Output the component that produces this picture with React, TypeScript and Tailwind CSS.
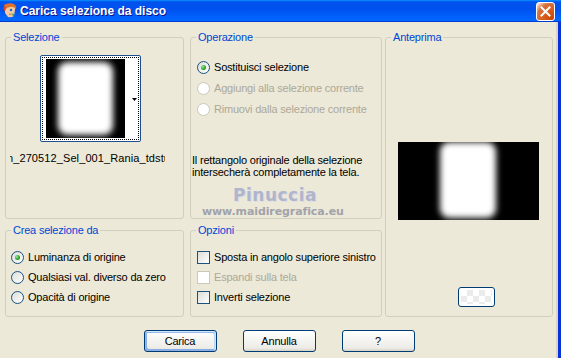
import React from 'react';

const font = "font-['Liberation_Sans',Arial,sans-serif]";

const Radio = ({ checked = false, disabled = false }: { checked?: boolean; disabled?: boolean }) => (
  <span
    className={
      'flex h-[13px] w-[13px] shrink-0 items-center justify-center rounded-full border ' +
      (disabled
        ? 'border-[#cac8bb] bg-white'
        : 'border-[#1c5180] bg-[linear-gradient(135deg,#dcdcd7,#ffffff)]')
    }
  >
    {checked && (
      <span className="h-[5px] w-[5px] rounded-full bg-[radial-gradient(circle_at_35%_35%,#9ee69e,#21a121_60%,#1a8a1a)]" />
    )}
  </span>
);

const Checkbox = ({ disabled = false }: { disabled?: boolean }) => (
  <span
    className={
      'block h-[13px] w-[13px] shrink-0 border ' +
      (disabled
        ? 'border-[#cac8bb] bg-white'
        : 'border-[#1c5180] bg-[linear-gradient(135deg,#dcdcd7,#ffffff)]')
    }
  />
);

const Option = ({
  control,
  label,
  disabled = false,
}: {
  control: React.ReactNode;
  label: string;
  disabled?: boolean;
}) => (
  <div className="flex h-[13px] items-center gap-[4px]">
    {control}
    <span className={'whitespace-nowrap leading-[13px] ' + (disabled ? 'text-[#aca899]' : 'text-black')}>
      {label}
    </span>
  </div>
);

const Group = ({
  title,
  className = '',
  children,
}: {
  title: string;
  className?: string;
  children?: React.ReactNode;
}) => (
  <fieldset className={'rounded-[3px] border border-[#d0d0bf] ' + className}>
    <legend className="ml-[5px] px-[2px] leading-[13px] text-[#0046d5]">{title}</legend>
    {children}
  </fieldset>
);

const BlurShape = ({ className }: { className: string }) => (
  <div className={'rounded-[9px] bg-white blur-[3px] ' + className} />
);

const Button = ({ label, primary = false }: { label: string; primary?: boolean }) => (
  <button
    className={
      'h-[22px] w-[73px] rounded-[3px] border border-[#003c74] bg-[linear-gradient(180deg,#ffffff,#ecebe6_86%,#d6d0c5)] leading-[13px] text-black ' +
      (primary
        ? 'shadow-[inset_-1px_1px_#cee7ff,inset_1px_2px_#98b8ea,inset_-2px_2px_#bcd4f6,inset_1px_-1px_#89ade4,inset_2px_-2px_#89ade4]'
        : '')
    }
  >
    {label}
  </button>
);

const PspIcon = () => (
  <svg width="16" height="16" viewBox="0 0 16 16">
    <path d="M3 3 Q6 0 11 1 Q14 3 13 7 L12 13 Q9 15 6 14 L3 10 Z" fill="#f2c9a0" />
    <path d="M2 2 Q6 -1 12 1 Q15 3 14 6 Q11 3 8 4 Q5 4 3 7 Z" fill="#e0702a" />
    <path d="M1 5 Q2 3 4 4 L3 9 Z" fill="#d04a20" />
    <circle cx="9" cy="7" r="1.2" fill="#1d5fd0" />
    <path d="M11 10 Q13 12 12 14 L10 12 Z" fill="#38a83a" />
    <path d="M7 11 Q8 12 9.5 11" stroke="#b0503a" strokeWidth="0.8" fill="none" />
  </svg>
);

export default function App() {
  return (
    <div className={'flex h-[358px] w-[561px] flex-col overflow-hidden bg-[#ece9d8] text-[11px] tracking-[-0.2px] ' + font}>
      {/* Title bar */}
      <div className="flex h-[22px] shrink-0 items-center bg-[linear-gradient(180deg,#0997ff_0%,#0053ee_8%,#0050ee_40%,#0066ff_88%,#0066ff_93%,#005bff_95%,#003dd7_96%,#003dd7_100%)] pl-[2px] pr-[6px]">
        <PspIcon />
        <span className="ml-[2px] text-[12px] font-bold tracking-[0px] text-white [text-shadow:1px_1px_#0f1089]">
          Carica selezione da disco
        </span>
        <button className="ml-auto mt-[1px] flex h-[19px] w-[19px] items-center justify-center rounded-[3px] border border-white bg-[radial-gradient(circle_at_90%_90%,#cc4600_0%,#dc6527_55%,#cd7546_70%,#ffccb2_90%,#fff_100%)]">
          <svg width="11" height="11" viewBox="0 0 11 11">
            <path d="M1.5 1.5 L9.5 9.5 M9.5 1.5 L1.5 9.5" stroke="#fff" strokeWidth="2" strokeLinecap="square" />
          </svg>
        </button>
      </div>

      {/* Body */}
      <div className="flex flex-1 flex-col border-r-[3px] border-[#0831d9] pl-[5px] pt-[9px] shadow-[inset_-2px_0_#d8d4c6]">
        <div className="flex">
          <div className="grid grid-cols-[179px_192px] grid-rows-[188px_93px] gap-x-[6px] gap-y-[5px]">
            {/* Selezione */}
            <Group title="Selezione">
              <div className="ml-[34px] mt-[11px] h-[87px] w-[101px] rounded-[2px] border border-[#1f4f8f] bg-white p-px">
                <div className="flex h-full items-center border border-dotted border-black pl-[3px]">
                  <div className="flex h-[79px] w-[79px] justify-center overflow-hidden bg-black pt-[3px]">
                    <BlurShape className="h-[73px] w-[55px]" />
                  </div>
                  <div className="flex flex-1 justify-end pr-[1px] pt-[2px]">
                    <svg width="5" height="3" viewBox="0 0 5 3">
                      <path d="M0 0 H5 L2.5 3 Z" fill="#000" />
                    </svg>
                  </div>
                </div>
              </div>
              <div className="ml-[4px] mt-[10px] w-[155px] overflow-hidden">
                <div className="-ml-[3px] whitespace-nowrap leading-[13px] tracking-[0.1px]">n_270512_Sel_001_Rania_tdstudio</div>
              </div>
            </Group>

            {/* Operazione */}
            <Group title="Operazione">
              <div className="mt-[17px] flex flex-col gap-[8px] pl-[6px]">
                <Option control={<Radio checked />} label="Sostituisci selezione" />
                <Option control={<Radio disabled />} label="Aggiungi alla selezione corrente" disabled />
                <Option control={<Radio disabled />} label="Rimuovi dalla selezione corrente" disabled />
              </div>
              <div className="mt-[38px] pl-[1px] leading-[12px]">
                <div>Il rettangolo originale della selezione</div>
                <div>intersecherà completamente la tela.</div>
              </div>
              <div className="ml-[42px] mt-[7px] font-['DejaVu_Sans',sans-serif] text-[17px] font-bold leading-[20px] tracking-[0.5px] text-[#b0b5cc] [text-shadow:1px_1px_#dcdde6]">
                Pinuccia
              </div>
              <div className="ml-[11px] font-['DejaVu_Sans',sans-serif] text-[11px] font-bold leading-[13px] tracking-[-0.1px] text-[#a2a2aa]">
                www.maidiregrafica.eu
              </div>
            </Group>

            {/* Crea selezione da */}
            <Group title="Crea selezione da">
              <div className="mt-[14px] flex flex-col gap-[7px] pl-[5px]">
                <Option control={<Radio checked />} label="Luminanza di origine" />
                <Option control={<Radio />} label="Qualsiasi val. diverso da zero" />
                <Option control={<Radio />} label="Opacità di origine" />
              </div>
            </Group>

            {/* Opzioni */}
            <Group title="Opzioni">
              <div className="mt-[14px] flex flex-col gap-[7px] pl-[6px]">
                <Option control={<Checkbox />} label="Sposta in angolo superiore sinistro" />
                <Option control={<Checkbox disabled />} label="Espandi sulla tela" disabled />
                <Option control={<Checkbox />} label="Inverti selezione" />
              </div>
            </Group>
          </div>

          {/* Anteprima */}
          <Group title="Anteprima" className="ml-[3px] h-[286px] w-[168px]">
            <div className="ml-[12px] mt-[98px] flex h-[78px] w-[141px] overflow-hidden bg-black pl-[42px]">
              <BlurShape className="h-[76px] w-[56px]" />
            </div>
            <div className="ml-[72px] mt-[67px] h-[20px] w-[37px] rounded-[3px] border border-[#003c74] bg-white p-[2px]">
              <div className="h-full w-full bg-[repeating-conic-gradient(#e6e6e6_0_25%,#ffffff_0_50%)] bg-[length:12px_12px] opacity-80" />
            </div>
          </Group>
        </div>

        {/* Buttons */}
        <div className="mt-[13px] flex justify-center gap-[26px] pr-[5px]">
          <Button label="Carica" primary />
          <Button label="Annulla" />
          <Button label="?" />
        </div>
      </div>
    </div>
  );
}
